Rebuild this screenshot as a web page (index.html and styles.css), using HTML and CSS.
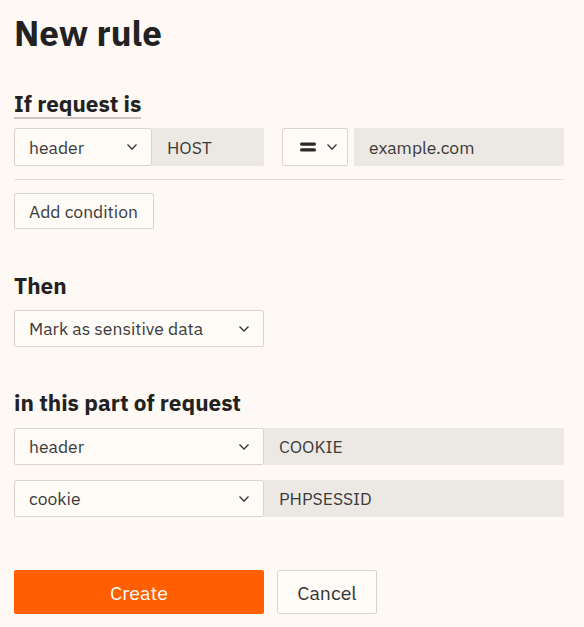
FILE: index.html
```html
<!DOCTYPE html>
<html lang="en">
<head>
<meta charset="utf-8">
<title>New rule</title>
<link rel="stylesheet" href="styles.css">
</head>
<body>
<main class="page">
  <h1 class="title">New rule</h1>

  <section class="section section--condition">
    <h2 class="tab">If request is</h2>
    <div class="condition">
      <div class="pair pair--short">
        <div class="select select--point">
          <span class="select__value">header</span>
          <svg class="chevron" viewBox="0 0 12 8" width="12" height="8"><path d="M1.5 1.5l4.5 4.5 4.5-4.5" fill="none" stroke="#333" stroke-width="1.3"/></svg>
        </div>
        <div class="field field--name">HOST</div>
      </div>
      <div class="select select--op">
        <svg class="equals" viewBox="0 0 16 10" width="16" height="10"><rect x="0" y="0.5" width="16" height="3.2" rx="1.6" fill="#2a2a2a"/><rect x="0" y="6.3" width="16" height="3.2" rx="1.6" fill="#2a2a2a"/></svg>
        <svg class="chevron" viewBox="0 0 12 8" width="12" height="8"><path d="M1.5 1.5l4.5 4.5 4.5-4.5" fill="none" stroke="#333" stroke-width="1.3"/></svg>
      </div>
      <div class="field field--value">example.com</div>
    </div>
    <hr class="divider">
    <button class="btn btn--small" type="button">Add condition</button>
  </section>

  <section class="section section--then">
    <h2 class="heading">Then</h2>
    <div class="select select--action">
      <span class="select__value">Mark as sensitive data</span>
      <svg class="chevron" viewBox="0 0 12 8" width="12" height="8"><path d="M1.5 1.5l4.5 4.5 4.5-4.5" fill="none" stroke="#333" stroke-width="1.3"/></svg>
    </div>
  </section>

  <section class="section section--part">
    <h2 class="heading">in this part of request</h2>
    <div class="pair pair--full">
      <div class="select select--point">
        <span class="select__value">header</span>
        <svg class="chevron" viewBox="0 0 12 8" width="12" height="8"><path d="M1.5 1.5l4.5 4.5 4.5-4.5" fill="none" stroke="#333" stroke-width="1.3"/></svg>
      </div>
      <div class="field">COOKIE</div>
    </div>
    <div class="pair pair--full">
      <div class="select select--point">
        <span class="select__value">cookie</span>
        <svg class="chevron" viewBox="0 0 12 8" width="12" height="8"><path d="M1.5 1.5l4.5 4.5 4.5-4.5" fill="none" stroke="#333" stroke-width="1.3"/></svg>
      </div>
      <div class="field">PHPSESSID</div>
    </div>
  </section>

  <div class="actions">
    <button class="btn btn--primary" type="button">Create</button>
    <button class="btn btn--secondary" type="button">Cancel</button>
  </div>
</main>
</body>
</html>
```

FILE: styles.css
```css
html, body {
  margin: 0;
  padding: 0;
  background: #fef9f4;
}

body {
  font-family: "IBM Plex Sans", Roboto, "Liberation Sans", sans-serif;
  color: #3a3a3a;
  font-size: 17.5px;
}

.page {
  width: 550px;
  padding: 0 14px;
}

.title {
  margin: 13px 0 0 0;
  font-size: 35px;
  line-height: 40px;
  font-weight: 700;
  color: #222;
}

.section--condition {
  margin-top: 39px;
}

.tab {
  display: inline-block;
  margin: 0;
  font-size: 22.5px;
  line-height: 24px;
  font-weight: 700;
  color: #222;
  padding-bottom: 1px;
  border-bottom: 2px solid #c9c5c0;
}

.heading {
  margin: 0;
  font-size: 22.5px;
  line-height: 28px;
  font-weight: 700;
  color: #222;
}

.condition {
  display: flex;
  margin-top: 9px;
  height: 38px;
}

.pair {
  display: flex;
}

.pair--short {
  width: 250px;
  height: 38px;
}

.pair--short .select--point {
  width: 138px;
}

.pair--full {
  width: 550px;
  height: 37px;
  margin-top: 15px;
}

.section--part .pair--full:first-of-type {
  margin-top: 11px;
}

.pair--full .select--point {
  width: 250px;
}

.select {
  box-sizing: border-box;
  display: flex;
  align-items: center;
  justify-content: space-between;
  border: 1px solid #d8d4cf;
  border-radius: 2px;
  background: #fffbf7;
  padding: 0 13px 0 14px;
  height: 100%;
}

.chevron {
  display: block;
  flex: none;
  width: 12px;
  height: 8px;
}

.field {
  box-sizing: border-box;
  flex: 1;
  display: flex;
  align-items: center;
  background: #ece8e3;
  border-radius: 0 2px 2px 0;
  padding: 0 15px;
  height: 100%;
}

.select--op {
  width: 66px;
  margin-left: 18px;
  padding: 0 9px 0 17px;
}

.equals {
  display: block;
  width: 16px;
  height: 10px;
}

.field--value {
  margin-left: 6px;
  border-radius: 2px;
}

.divider {
  margin: 13px 0 0 0;
  border: 0;
  border-top: 1px solid #e4dfd9;
  height: 0;
}

.btn {
  font-family: inherit;
  cursor: pointer;
  box-sizing: border-box;
  border-radius: 2px;
}

.btn--small {
  margin-top: 13px;
  height: 36px;
  padding: 0 15px 0 14px;
  font-size: 17.5px;
  color: #3a3a3a;
  background: #fffbf7;
  border: 1px solid #d8d4cf;
}

.section--then {
  margin-top: 43px;
}

.select--action {
  width: 250px;
  height: 37px;
  margin-top: 10px;
}

.section--part {
  margin-top: 42px;
}

.actions {
  display: flex;
  margin-top: 53px;
  gap: 13px;
}

.btn--primary {
  width: 250px;
  height: 44px;
  background: #ff5f00;
  color: #fff;
  border: 0;
  font-size: 19.5px;
}

.btn--secondary {
  height: 44px;
  width: 100px;
  background: #fffbf7;
  color: #333;
  border: 1px solid #d8d4cf;
  font-size: 19.5px;
}
```
